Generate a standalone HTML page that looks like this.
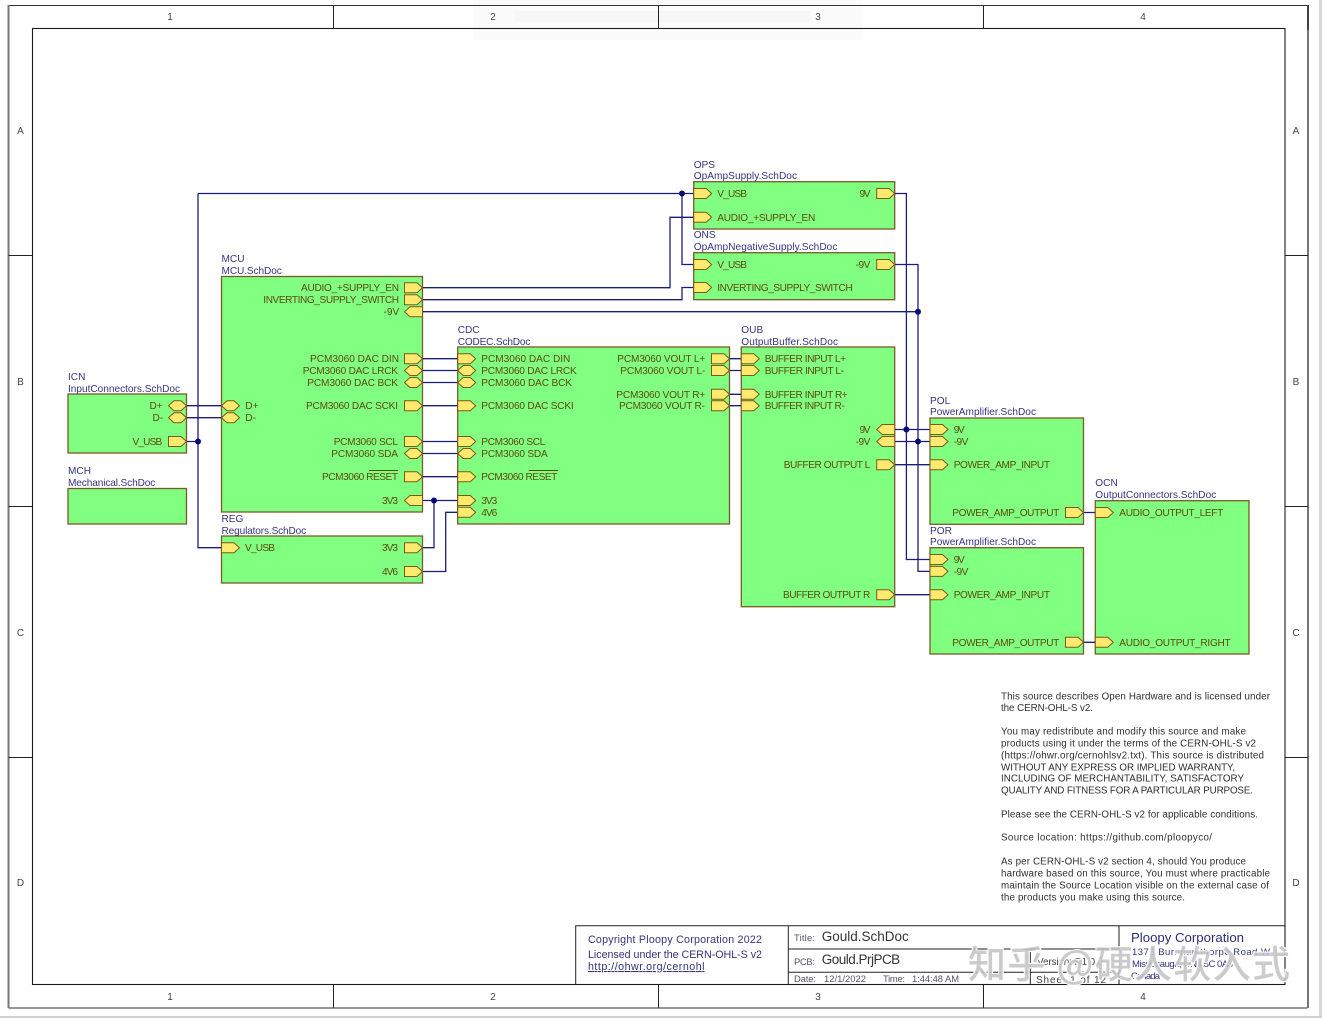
<!DOCTYPE html>
<html lang="en">
<head>
<meta charset="utf-8">
<title>Gould.SchDoc</title>
<style>
html,body{margin:0;padding:0;background:#fff;width:1322px;height:1018px;overflow:hidden}
svg{display:block}
text{font-family:"Liberation Sans","Noto Sans CJK SC",sans-serif}
.l{font-size:10.1px;fill:#5c4a0e}
.d{font-size:10.1px;fill:#34347f}
.b{font-size:9.8px;fill:#2f2f2f}
.g{font-size:10px;fill:#444}
.c{font-size:10.7px;fill:#34347f}
.s{fill:#80ff80;stroke:#7a5a28;stroke-width:1.3}
.w{fill:none;stroke:#1c1c7c;stroke-width:1.3}
.p{fill:#ffe96e;stroke:#7a5a14;stroke-width:1}
.f{fill:none;stroke:#222;stroke-width:1}
.t{font-size:9.4px;fill:#55556a}
</style>
</head>
<body>
<svg width="1322" height="1018" viewBox="0 0 1322 1018" xmlns="http://www.w3.org/2000/svg">
<defs>
<path id="R" class="p" d="M0,-5H12.5L18,0L12.5,5H0Z"/>
<path id="L" class="p" d="M0,0L5.5,-5H18V5H5.5Z"/>
<path id="H" class="p" d="M0,0L5.5,-5H12.5L18,0L12.5,5H5.5Z"/>
</defs>
<rect width="1322" height="1018" fill="#fff"/>
<rect x="1319" y="0" width="3" height="1018" fill="#d8d8d8"/>
<rect x="0" y="1016" width="1322" height="2" fill="#cfcfcf"/>
<rect x="473" y="0" width="389" height="40" fill="#fbfbfb"/>
<rect x="515" y="11" width="295" height="11" fill="#f7f7f7"/>

<!-- frame -->
<path d="M8.5,5.5H1307.5" fill="none" stroke="#333" stroke-width="1"/>
<path d="M8.5,1008H1307.5" fill="none" stroke="#333" stroke-width="1"/>
<path d="M8.5,5V1008" fill="none" stroke="#777" stroke-width="2"/>
<path d="M1308,5V30" fill="none" stroke="#444" stroke-width="2"/>
<path d="M1308,30V1008" fill="none" stroke="#777" stroke-width="2"/>
<rect x="32.5" y="28.5" width="1252.5" height="956" fill="none" stroke="#1c1c1c" stroke-width="1.1"/>
<path class="f" d="M333.5,5.5V28.5M658.5,5.5V28.5M983.5,5.5V28.5M333.5,984.5V1008M658.5,984.5V1008M983.5,984.5V1008M8.5,255.5H32.5M8.5,506.5H32.5M8.5,757.5H32.5M1285,255.5H1308M1285,506.5H1308M1285,757.5H1308"/>
<g class="g" text-anchor="middle">
<text x="170" y="20">1</text><text x="493" y="20">2</text><text x="818" y="20">3</text><text x="1143" y="20">4</text>
<text x="170" y="1000">1</text><text x="493" y="1000">2</text><text x="818" y="1000">3</text><text x="1143" y="1000">4</text>
<text x="20.5" y="134">A</text><text x="20.5" y="385">B</text><text x="20.5" y="636">C</text><text x="20.5" y="886">D</text>
<text x="1296" y="134">A</text><text x="1296" y="385">B</text><text x="1296" y="636">C</text><text x="1296" y="886">D</text>
</g>

<!-- sheets -->
<rect class="s" x="68" y="394" width="118.5" height="59"/>
<rect class="s" x="68" y="488.5" width="118.5" height="35.5"/>
<rect class="s" x="221.5" y="276.5" width="201" height="235.5"/>
<rect class="s" x="221.5" y="536" width="201" height="47"/>
<rect class="s" x="457.7" y="347" width="271.8" height="177"/>
<rect class="s" x="693.7" y="181.7" width="201" height="47.3"/>
<rect class="s" x="693.7" y="252.7" width="201" height="47"/>
<rect class="s" x="741.3" y="347" width="153.4" height="259.7"/>
<rect class="s" x="930" y="418" width="153.5" height="106.3"/>
<rect class="s" x="930" y="547.7" width="153.5" height="106.3"/>
<rect class="s" x="1095.3" y="500.7" width="153.7" height="153.3"/>

<!-- wires -->
<path class="w" d="M186.5,441.5H198M198,193.5V547.7H221.5M198,193.5H693.7M682,193.5V264.5H693.7"/>
<path class="w" d="M186.5,405.7H221.5M186.5,417.7H221.5"/>
<path class="w" d="M422.5,287.7H670V217.3H693.7"/>
<path class="w" d="M422.5,299.7H682V287.5H693.7"/>
<path class="w" d="M422.5,311.7H918"/>
<path class="w" d="M894.7,264.5H918V571.4H930"/>
<path class="w" d="M894.7,193.5H906.4V559.5H930"/>
<path class="w" d="M894.7,429.5H930M894.7,441.5H930M894.7,464.7H930M894.7,594.7H930"/>
<path class="w" d="M1083.5,512.5H1095.3M1083.5,642.3H1095.3"/>
<path class="w" d="M422.5,358.7H457.7M422.5,370.5H457.7M422.5,382.5H457.7M422.5,405.7H457.7M422.5,441.5H457.7M422.5,453.5H457.7M422.5,476.7H457.7M422.5,500.5H457.7"/>
<path class="w" d="M434,500.5V547.7H422.5"/>
<path class="w" d="M422.5,571.5H445.7V512.3H457.7"/>
<path class="w" d="M729.5,358.7H741.3M729.5,370.5H741.3M729.5,394.3H741.3M729.5,405.7H741.3"/>
<g fill="#0a0a70">
<circle cx="198" cy="441.5" r="3"/><circle cx="682" cy="193.5" r="3"/><circle cx="918" cy="311.7" r="3"/>
<circle cx="906.4" cy="429.5" r="3"/><circle cx="918" cy="441.5" r="3"/><circle cx="434" cy="500.5" r="3"/>
</g>

<!-- ports -->
<use href="#H" x="168.5" y="405.7"/><use href="#H" x="168.5" y="417.7"/><use href="#R" x="168.5" y="441.5"/>
<use href="#H" x="221.5" y="405.7"/><use href="#H" x="221.5" y="417.7"/>
<use href="#R" x="404.5" y="287.7"/><use href="#R" x="404.5" y="299.7"/><use href="#L" x="404.5" y="311.7"/>
<use href="#R" x="404.5" y="358.7"/><use href="#H" x="404.5" y="370.5"/><use href="#H" x="404.5" y="382.5"/>
<use href="#R" x="404.5" y="405.7"/><use href="#R" x="404.5" y="441.5"/><use href="#H" x="404.5" y="453.5"/>
<use href="#R" x="404.5" y="476.7"/><use href="#L" x="404.5" y="500.5"/>
<use href="#R" x="221.5" y="547.7"/><use href="#R" x="404.5" y="547.7"/><use href="#R" x="404.5" y="571.5"/>
<use href="#R" x="457.7" y="358.7"/><use href="#H" x="457.7" y="370.5"/><use href="#H" x="457.7" y="382.5"/>
<use href="#R" x="457.7" y="405.7"/><use href="#R" x="457.7" y="441.5"/><use href="#H" x="457.7" y="453.5"/>
<use href="#R" x="457.7" y="476.7"/><use href="#R" x="457.7" y="500.5"/><use href="#R" x="457.7" y="512.3"/>
<use href="#R" x="711.5" y="358.7"/><use href="#R" x="711.5" y="370.5"/><use href="#R" x="711.5" y="394.3"/><use href="#R" x="711.5" y="405.7"/>
<use href="#R" x="741.3" y="358.7"/><use href="#R" x="741.3" y="370.5"/><use href="#R" x="741.3" y="394.3"/><use href="#R" x="741.3" y="405.7"/>
<use href="#L" x="876.7" y="429.5"/><use href="#L" x="876.7" y="441.5"/><use href="#R" x="876.7" y="464.7"/><use href="#R" x="876.7" y="594.7"/>
<use href="#R" x="693.7" y="193.5"/><use href="#R" x="693.7" y="217.3"/><use href="#R" x="876.7" y="193.5"/>
<use href="#R" x="693.7" y="264.5"/><use href="#R" x="693.7" y="287.5"/><use href="#R" x="876.7" y="264.5"/>
<use href="#R" x="930" y="429.5"/><use href="#R" x="930" y="441.5"/><use href="#R" x="930" y="464.7"/><use href="#R" x="1065.5" y="512.5"/>
<use href="#R" x="930" y="559.5"/><use href="#R" x="930" y="571.4"/><use href="#R" x="930" y="594.7"/><use href="#R" x="1065.5" y="642.3"/>
<use href="#R" x="1095.3" y="512.5"/><use href="#R" x="1095.3" y="642.3"/>

<!-- designators -->
<g class="d">
<text x="68" y="380">ICN</text><text x="68" y="392" textLength="112">InputConnectors.SchDoc</text>
<text x="68" y="474">MCH</text><text x="68" y="486" textLength="87.3">Mechanical.SchDoc</text>
<text x="221.5" y="262">MCU</text><text x="221.5" y="274" textLength="60.3">MCU.SchDoc</text>
<text x="221.5" y="522">REG</text><text x="221.5" y="534" textLength="84.7">Regulators.SchDoc</text>
<text x="457.7" y="333">CDC</text><text x="457.7" y="345" textLength="72.7">CODEC.SchDoc</text>
<text x="741.3" y="333">OUB</text><text x="741.3" y="345" textLength="96.7">OutputBuffer.SchDoc</text>
<text x="693.7" y="168">OPS</text><text x="693.7" y="179" textLength="103.3">OpAmpSupply.SchDoc</text>
<text x="693.7" y="238">ONS</text><text x="693.7" y="250" textLength="143.7">OpAmpNegativeSupply.SchDoc</text>
<text x="930" y="404">POL</text><text x="930" y="415" textLength="106">PowerAmplifier.SchDoc</text>
<text x="930" y="534">POR</text><text x="930" y="545" textLength="106">PowerAmplifier.SchDoc</text>
<text x="1095.3" y="486">OCN</text><text x="1095.3" y="498" textLength="121">OutputConnectors.SchDoc</text>
</g>

<!-- pin labels -->
<g class="l">
<text x="149.5" y="409.2">D+</text><text x="152.5" y="421.2">D-</text><text x="132.5" y="445" textLength="29.7">V_USB</text>
<text x="301" y="291.2" textLength="98">AUDIO_+SUPPLY_EN</text><text x="263.3" y="303.2" textLength="135.7">INVERTING_SUPPLY_SWITCH</text><text x="383.5" y="315.2">-9V</text>
<text x="310" y="362.2" textLength="89">PCM3060 DAC DIN</text><text x="302.7" y="374" textLength="95.3">PCM3060 DAC LRCK</text><text x="307.3" y="386" textLength="90.7">PCM3060 DAC BCK</text>
<text x="306" y="409.2" textLength="92">PCM3060 DAC SCKI</text><text x="333.7" y="445" textLength="64.3">PCM3060 SCL</text><text x="331.3" y="457" textLength="66.7">PCM3060 SDA</text>
<text x="322" y="480.2" textLength="76">PCM3060 RESET</text><text x="382" y="504" textLength="16">3V3</text>
<text x="382" y="551.2" textLength="16">3V3</text><text x="382" y="575" textLength="16">4V6</text>
<text x="617.3" y="362.2" textLength="88">PCM3060 VOUT L+</text><text x="620.3" y="374" textLength="85">PCM3060 VOUT L-</text>
<text x="616.3" y="397.8" textLength="89">PCM3060 VOUT R+</text><text x="619" y="409.2" textLength="86">PCM3060 VOUT R-</text>
<text x="859.5" y="197" textLength="11">9V</text><text x="855.7" y="268" textLength="14.6">-9V</text>
<text x="859.5" y="433" textLength="11">9V</text><text x="855.7" y="445" textLength="14.6">-9V</text>
<text x="783.7" y="468.2" textLength="86.6">BUFFER OUTPUT L</text><text x="783" y="598.2" textLength="87.3">BUFFER OUTPUT R</text>
<text x="952.3" y="516" textLength="107">POWER_AMP_OUTPUT</text><text x="952.3" y="645.8" textLength="107">POWER_AMP_OUTPUT</text>
<text x="245.3" y="409.2">D+</text><text x="245.3" y="421.2">D-</text><text x="245" y="551.2" textLength="30">V_USB</text>
<text x="481.3" y="362.2" textLength="89">PCM3060 DAC DIN</text><text x="481.3" y="374" textLength="95.4">PCM3060 DAC LRCK</text><text x="481.3" y="386" textLength="90.7">PCM3060 DAC BCK</text>
<text x="481.3" y="409.2" textLength="92.4">PCM3060 DAC SCKI</text><text x="481.3" y="445" textLength="64">PCM3060 SCL</text><text x="481.3" y="457" textLength="66.4">PCM3060 SDA</text>
<text x="481.3" y="480.2" textLength="76">PCM3060 RESET</text><text x="481.3" y="504" textLength="16">3V3</text><text x="481.3" y="515.8" textLength="16">4V6</text>
<text x="764.7" y="362.2" textLength="81.3">BUFFER INPUT L+</text><text x="764.7" y="374" textLength="79.3">BUFFER INPUT L-</text>
<text x="764.7" y="397.8" textLength="83">BUFFER INPUT R+</text><text x="764.7" y="409.2" textLength="80">BUFFER INPUT R-</text>
<text x="717.3" y="197" textLength="29.7">V_USB</text><text x="717.3" y="220.8" textLength="98">AUDIO_+SUPPLY_EN</text>
<text x="717.3" y="268" textLength="29.7">V_USB</text><text x="717.3" y="291" textLength="135.4">INVERTING_SUPPLY_SWITCH</text>
<text x="953.7" y="433" textLength="11">9V</text><text x="953.7" y="445" textLength="14.6">-9V</text><text x="953.7" y="468.2" textLength="96.3">POWER_AMP_INPUT</text>
<text x="953.7" y="563" textLength="11">9V</text><text x="953.7" y="575" textLength="14.6">-9V</text><text x="953.7" y="598.2" textLength="96.3">POWER_AMP_INPUT</text>
<text x="1119.3" y="516" textLength="104">AUDIO_OUTPUT_LEFT</text><text x="1119.3" y="645.8" textLength="111.4">AUDIO_OUTPUT_RIGHT</text>
</g>
<path d="M369,470.5H398M528.7,470.5H558" fill="none" stroke="#5c4a0e" stroke-width="1"/>

<!-- notes -->
<g class="b">
<text x="1001" y="699.5" textLength="269">This source describes Open Hardware and is licensed under</text>
<text x="1001" y="711" textLength="92">the CERN-OHL-S v2.</text>
<text x="1001" y="734.5" textLength="245">You may redistribute and modify this source and make</text>
<text x="1001" y="746.5" textLength="255">products using it under the terms of the CERN-OHL-S v2</text>
<text x="1001" y="758.5" textLength="263">(https://ohwr.org/cernohlsv2.txt). This source is distributed</text>
<text x="1001" y="770.5" textLength="234">WITHOUT ANY EXPRESS OR IMPLIED WARRANTY,</text>
<text x="1001" y="781.5" textLength="243">INCLUDING OF MERCHANTABILITY, SATISFACTORY</text>
<text x="1001" y="793.5" textLength="252">QUALITY AND FITNESS FOR A PARTICULAR PURPOSE.</text>
<text x="1001" y="817.5" textLength="257">Please see the CERN-OHL-S v2 for applicable conditions.</text>
<text x="1001" y="840.5" textLength="211">Source location:  https://github.com/ploopyco/</text>
<text x="1001" y="864.5" textLength="245">As per CERN-OHL-S v2 section 4, should You produce</text>
<text x="1001" y="876.5" textLength="269">hardware based on this source, You must where practicable</text>
<text x="1001" y="888.5" textLength="268">maintain the Source Location visible on the external case of</text>
<text x="1001" y="900.5" textLength="184">the products you make using this source.</text>
</g>

<!-- title block -->
<path class="f" d="M575.7,984.5V925.7H1285M788.3,925.7V984.5M1119,925.7V984.5M788.3,949H1119M788.3,972.3H1119M1030.3,949V984.5"/>
<g class="c">
<text x="588" y="943" textLength="174">Copyright Ploopy Corporation 2022</text>
<text x="588" y="958" textLength="174">Licensed under the CERN-OHL-S v2</text>
<text x="588" y="970" textLength="116.5" text-decoration="underline">http://ohwr.org/cernohl</text>
</g>
<text class="t" x="794" y="941" textLength="21">Title:</text>
<text x="821.7" y="941" font-size="13.5" fill="#333" textLength="87">Gould.SchDoc</text>
<text class="t" x="794" y="965" textLength="21">PCB:</text>
<text x="821.7" y="964" font-size="13.5" fill="#333" textLength="78.5">Gould.PrjPCB</text>
<text class="t" x="794" y="982" textLength="22">Date:</text>
<text class="t" x="824" y="982" textLength="42">12/1/2022</text>
<text class="t" x="883" y="982" textLength="22">Time:</text>
<text class="t" x="912" y="982" textLength="47">1:44:48 AM</text>
<text x="1037" y="965" font-size="10" fill="#444" textLength="66">Version: R1.0.0</text>
<text x="1036" y="983" font-size="10" fill="#444" textLength="70">Sheet  1   of  12</text>
<text x="1131" y="942" font-size="13.2" fill="#2c2c78" textLength="113">Ploopy Corporation</text>
<text x="1132" y="955" font-size="9.5" fill="#34347f" textLength="138">1375 Burnhamthorpe Road W</text>
<text x="1132" y="967" font-size="9.5" fill="#34347f" textLength="101">Mississauga, ON L5C 0A3</text>
<text x="1131" y="979" font-size="9.5" fill="#34347f" textLength="29">Canada</text>

<!-- watermark -->
<text x="968" y="978" font-size="38" font-weight="500" textLength="322" fill="#c2c2c2" fill-opacity=".85" stroke="#fff" stroke-width="2" paint-order="stroke" style="font-family:'Noto Sans CJK SC','WenQuanYi Zen Hei',sans-serif">知乎 @硬人软入式</text>
</svg>
</body>
</html>
